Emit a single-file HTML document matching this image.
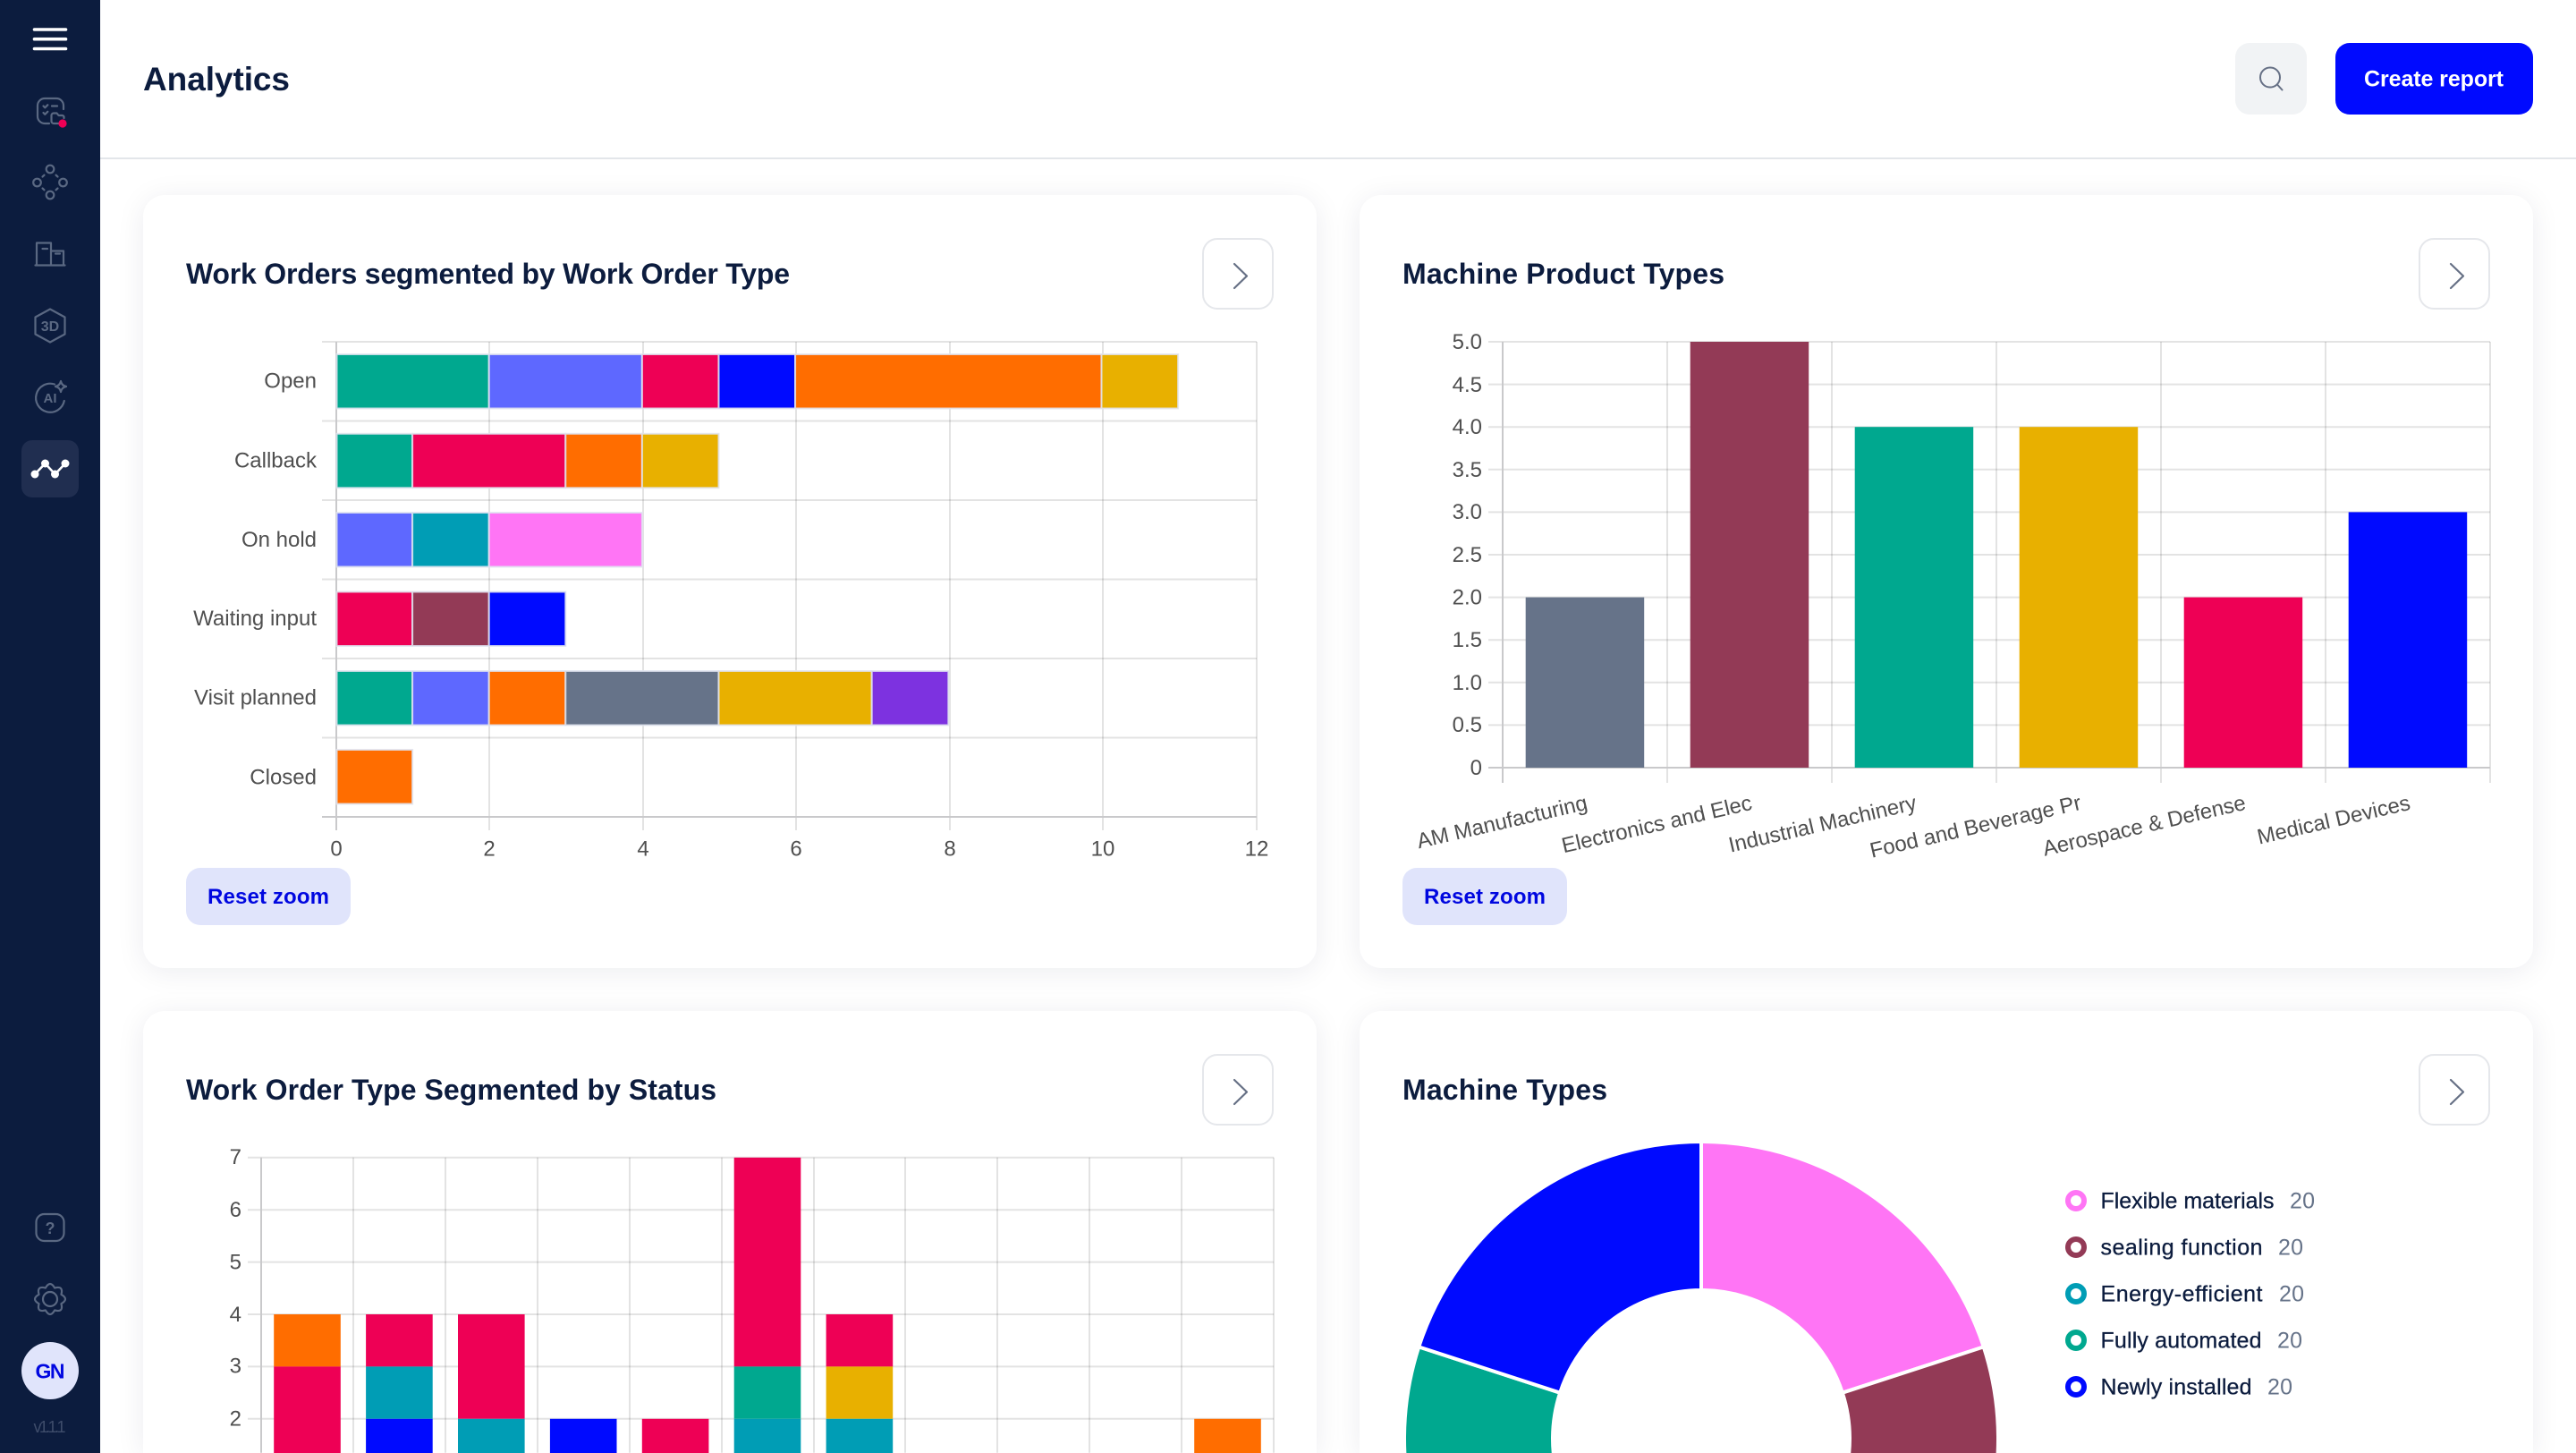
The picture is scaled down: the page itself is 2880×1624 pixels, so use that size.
<!DOCTYPE html>
<html><head><meta charset="utf-8"><title>Analytics</title>
<style>
html,body{margin:0;padding:0;width:2880px;height:1624px;overflow:hidden;background:#fff}
#root{position:absolute;left:0;top:0;width:2880px;height:1624px;overflow:hidden;background:#fff}
.card{position:absolute;background:#fff;border-radius:24px;box-shadow:0 4px 32px rgba(16,28,62,.08)}
.side{position:absolute;left:0;top:0;width:112px;height:1624px;background:#0c1c3e}
.hline{position:absolute;left:112px;top:176px;width:2768px;height:2px;background:#e3e6ea}
svg{position:absolute;left:0;top:0}
text{font-family:"Liberation Sans",sans-serif}
.t{font-size:32px;font-weight:700;fill:#0c1c3e}
.a{font-size:24px;fill:#4f4f4f}
.e{text-anchor:end}
.m{text-anchor:middle}
.g line,.g path{stroke:rgba(0,0,0,.11);stroke-width:2;fill:none}
.bb rect{stroke:rgba(225,228,240,.85);stroke-width:2}
.ic{fill:none;stroke:#5a6882;stroke-width:2.2;stroke-linecap:round;stroke-linejoin:round}
.rz{font-size:24px;font-weight:700;fill:#0007e0}
.l{font-size:25px;fill:#0c1c3e;stroke:#0c1c3e;stroke-width:.3px}
.v{font-size:25px;fill:#667389}
</style></head><body>
<div id="root">
<div class="card" style="left:160px;top:218px;width:1312px;height:864px"></div>
<div class="card" style="left:1520px;top:218px;width:1312px;height:864px"></div>
<div class="card" style="left:160px;top:1130px;width:1312px;height:494px;border-radius:24px 24px 0 0"></div>
<div class="card" style="left:1520px;top:1130px;width:1312px;height:494px;border-radius:24px 24px 0 0"></div>
<div class="hline"></div>
<div class="side"></div>
<svg width="2880" height="1624" viewBox="0 0 2880 1624" xmlns="http://www.w3.org/2000/svg">
<defs><clipPath id="fr"><rect x="0" y="0" width="2880" height="1624"/></clipPath></defs>

<!-- sidebar -->
<g stroke="#fff" stroke-width="3.6" stroke-linecap="round"><line x1="38.5" y1="33" x2="73.5" y2="33"/><line x1="38.5" y1="43.7" x2="73.5" y2="43.7"/><line x1="38.5" y1="54.5" x2="73.5" y2="54.5"/></g>
<g class="ic">
<path d="M55 138H50a8 8 0 0 1-8-8V118a8 8 0 0 1 8-8h13a8 8 0 0 1 8 8v4"/>
<path d="M48.5 118.5l1.8 1.8 3-3M48.5 126l1.8 1.8 3-3M58 118.5h6"/>
<path d="M66 138H60a2.5 2.5 0 0 1-2.5-2.5V129a2.5 2.5 0 0 1 2.500-2.500h3.500l2 2.500h4a2 2 0 0 1 2 2v1"/>
<circle cx="56" cy="189" r="4.300"/><circle cx="41.500" cy="204" r="4.300"/><circle cx="70.500" cy="204" r="4.300"/><circle cx="56" cy="218" r="4.300"/>
<path d="M47.500 197.500l2-1.800M62.500 195.700l2 1.800M47.500 210.500l2 1.800M64.500 210.500l-2 1.800"/>
<path d="M41 295V271.500H57V295M57 280.500H71V295M39.500 296.500H72.500M47.500 278h5.500M62 283.500h5"/>
<path d="M56 345.500L72.500 354.500V373.500L56 382.500L39.500 373.500V354.500Z"/>
<path d="M61 429.500A16 16 0 1 0 71.800 448"/>
<path d="M68 426Q69 431 74 432Q69 433 68 438Q67 433 62 432Q67 431 68 426Z"/>
<rect x="40.500" y="1357" width="31" height="30" rx="9"/>
<path transform="translate(56,1452)" d="M12.470 -5.170Q21.500 0 12.470 5.170Q15.200 15.200 5.170 12.470Q0 21.500 -5.170 12.470Q-15.200 15.200 -12.470 5.170Q-21.500 0 -12.470 -5.170Q-15.200 -15.200 -5.170 -12.470Q0 -21.500 5.170 -12.470Q15.200 -15.200 12.470 -5.170Z"/>
<circle cx="56" cy="1452" r="8"/>
</g>
<circle cx="70" cy="138" r="4.600" fill="#ee0055"/>
<text x="56" y="370" class="m" font-size="16" font-weight="700" fill="#5a6882">3D</text>
<text x="56" y="450" class="m" font-size="15" font-weight="700" fill="#5a6882">AI</text>
<text x="56" y="1379" class="m" font-size="18" font-weight="700" fill="#5a6882">?</text>
<rect x="24" y="492" width="64" height="64" rx="12" fill="#202e50"/>
<path d="M39 530L50.500 518L61.500 530L73 518" fill="none" stroke="#fff" stroke-width="2.600"/>
<g fill="#fff"><circle cx="39" cy="530" r="4.500"/><circle cx="50.500" cy="518" r="4.500"/><circle cx="61.500" cy="530" r="4.500"/><circle cx="73" cy="518" r="4.500"/></g>
<circle cx="56" cy="1532" r="32" fill="#e0e4fb"/>
<text x="56" y="1540.500" class="m" font-size="23" font-weight="700" fill="#0007e0" textLength="33">GN</text>
<text x="37.500" y="1601" font-size="18" fill="#3f4d6b" textLength="36">v1.1.1</text>

<!-- header -->
<text x="160" y="101" font-size="37" font-weight="700" fill="#0c1c3e" textLength="164">Analytics</text>
<rect x="2499" y="48" width="80" height="80" rx="16" fill="#f1f3f5"/>
<circle cx="2538" cy="86.500" r="11" fill="none" stroke="#667085" stroke-width="2"/>
<line x1="2546" y1="94.500" x2="2551.500" y2="100.500" stroke="#667085" stroke-width="2" stroke-linecap="round"/>
<rect x="2611" y="48" width="221" height="80" rx="16" fill="#000aff"/>
<text x="2643" y="96.500" font-size="25" font-weight="700" fill="#fff" textLength="156">Create report</text>

<!-- titles -->
<text x="208" y="317" class="t" textLength="675">Work Orders segmented by Work Order Type</text>
<text x="1568" y="317" class="t" textLength="360">Machine Product Types</text>
<text x="208" y="1229" class="t" textLength="593">Work Order Type Segmented by Status</text>
<text x="1568" y="1229" class="t" textLength="229">Machine Types</text>

<!-- arrow buttons -->
<g fill="#fff" stroke="#e5e7eb" stroke-width="2">
<rect x="1345" y="267" width="78" height="78" rx="16"/>
<rect x="2705" y="267" width="78" height="78" rx="16"/>
<rect x="1345" y="1179" width="78" height="78" rx="16"/>
<rect x="2705" y="1179" width="78" height="78" rx="16"/>
</g>
<g fill="none" stroke="#667085" stroke-width="2.200" stroke-linecap="round" stroke-linejoin="round">
<path d="M1380 295L1394 308.500L1380 322"/>
<path d="M2740 295L2754 308.500L2740 322"/>
<path d="M1380 1207L1394 1220.500L1380 1234"/>
<path d="M2740 1207L2754 1220.500L2740 1234"/>
</g>

<!-- chart 1 -->
<g class="g">
<line x1="547" y1="382" x2="547" y2="928"/><line x1="719" y1="382" x2="719" y2="928"/><line x1="890" y1="382" x2="890" y2="928"/><line x1="1062" y1="382" x2="1062" y2="928"/><line x1="1233" y1="382" x2="1233" y2="928"/><line x1="1405" y1="382" x2="1405" y2="928"/>
<line x1="360" y1="382" x2="1405" y2="382"/><line x1="360" y1="470.500" x2="1405" y2="470.500"/><line x1="360" y1="559" x2="1405" y2="559"/><line x1="360" y1="647.500" x2="1405" y2="647.500"/><line x1="360" y1="736" x2="1405" y2="736"/><line x1="360" y1="824.500" x2="1405" y2="824.500"/>
</g>
<line x1="376" y1="382" x2="376" y2="928" stroke="#c9c9cb" stroke-width="2"/>
<line x1="360" y1="913" x2="1405" y2="913" stroke="#c9c9cb" stroke-width="2"/>
<g class="bb">
<rect x="376.500" y="396" width="170.200" height="60.500" fill="#00a88f"/><rect x="546.700" y="396" width="171.200" height="60.500" fill="#5e68ff"/><rect x="717.900" y="396" width="85.600" height="60.500" fill="#ee0055"/><rect x="803.500" y="396" width="85.600" height="60.500" fill="#000aff"/><rect x="889.100" y="396" width="342.400" height="60.500" fill="#ff6d00"/><rect x="1231.500" y="396" width="85.600" height="60.500" fill="#e8b000"/>
<rect x="376.500" y="484.800" width="84.600" height="60.500" fill="#00a88f"/><rect x="461.100" y="484.800" width="171.200" height="60.500" fill="#ee0055"/><rect x="632.300" y="484.800" width="85.600" height="60.500" fill="#ff6d00"/><rect x="717.900" y="484.800" width="85.600" height="60.500" fill="#e8b000"/>
<rect x="376.500" y="573" width="84.600" height="60.500" fill="#5e68ff"/><rect x="461.100" y="573" width="85.600" height="60.500" fill="#009db5"/><rect x="546.700" y="573" width="171.200" height="60.500" fill="#ff75f5"/>
<rect x="376.500" y="661.500" width="84.600" height="60.500" fill="#ee0055"/><rect x="461.100" y="661.500" width="85.600" height="60.500" fill="#933a56"/><rect x="546.700" y="661.500" width="85.600" height="60.500" fill="#000aff"/>
<rect x="376.500" y="750" width="84.600" height="60.500" fill="#00a88f"/><rect x="461.100" y="750" width="85.600" height="60.500" fill="#5e68ff"/><rect x="546.700" y="750" width="85.600" height="60.500" fill="#ff6d00"/><rect x="632.300" y="750" width="171.200" height="60.500" fill="#667389"/><rect x="803.500" y="750" width="171.200" height="60.500" fill="#e8b000"/><rect x="974.700" y="750" width="85.600" height="60.500" fill="#7d32e0"/>
<rect x="376.500" y="838" width="84.600" height="60.500" fill="#ff6d00"/>
</g>
<g class="a e">
<text x="354" y="433.500">Open</text><text x="354" y="522.500">Callback</text><text x="354" y="610.900">On hold</text><text x="354" y="699.100">Waiting input</text><text x="354" y="787.300">Visit planned</text><text x="354" y="876.500">Closed</text>
</g>
<g class="a m">
<text x="376" y="956.500">0</text><text x="547" y="956.500">2</text><text x="719" y="956.500">4</text><text x="890" y="956.500">6</text><text x="1062" y="956.500">8</text><text x="1233" y="956.500">10</text><text x="1405" y="956.500">12</text>
</g>
<rect x="208" y="970" width="184" height="64" rx="16" fill="#e0e4fb"/>
<text x="232" y="1010" class="rz" textLength="136">Reset zoom</text>

<!-- chart 2 -->
<g class="g">
<line x1="1864" y1="382" x2="1864" y2="875"/><line x1="2048" y1="382" x2="2048" y2="875"/><line x1="2232" y1="382" x2="2232" y2="875"/><line x1="2416" y1="382" x2="2416" y2="875"/><line x1="2600" y1="382" x2="2600" y2="875"/><line x1="2784" y1="382" x2="2784" y2="875"/>
<line x1="1664" y1="382" x2="2784" y2="382"/><line x1="1664" y1="429.600" x2="2784" y2="429.600"/><line x1="1664" y1="477.200" x2="2784" y2="477.200"/><line x1="1664" y1="524.800" x2="2784" y2="524.800"/><line x1="1664" y1="572.400" x2="2784" y2="572.400"/><line x1="1664" y1="620" x2="2784" y2="620"/><line x1="1664" y1="667.600" x2="2784" y2="667.600"/><line x1="1664" y1="715.200" x2="2784" y2="715.200"/><line x1="1664" y1="762.800" x2="2784" y2="762.800"/><line x1="1664" y1="810.400" x2="2784" y2="810.400"/>
</g>
<line x1="1680" y1="382" x2="1680" y2="875" stroke="#c9c9cb" stroke-width="2"/>
<line x1="1664" y1="858" x2="2784" y2="858" stroke="#c9c9cb" stroke-width="2"/>
<rect x="1705.700" y="667.600" width="132.500" height="190.400" fill="#667389"/>
<rect x="1889.700" y="382" width="132.500" height="476" fill="#933a56"/>
<rect x="2073.700" y="477.200" width="132.500" height="380.800" fill="#00a88f"/>
<rect x="2257.700" y="477.200" width="132.500" height="380.800" fill="#e8b000"/>
<rect x="2441.700" y="667.600" width="132.500" height="190.400" fill="#ee0055"/>
<rect x="2625.700" y="572.400" width="132.500" height="285.600" fill="#000aff"/>
<g class="a e">
<text x="1657" y="390">5.0</text><text x="1657" y="438">4.5</text><text x="1657" y="485">4.0</text><text x="1657" y="533">3.5</text><text x="1657" y="580">3.0</text><text x="1657" y="628">2.5</text><text x="1657" y="675.500">2.0</text><text x="1657" y="723">1.5</text><text x="1657" y="771">1.0</text><text x="1657" y="818">0.5</text><text x="1657" y="866">0</text>
<text transform="translate(1776,904.500) rotate(-13)">AM Manufacturing</text>
<text transform="translate(1960,904.500) rotate(-13)">Electronics and Elec</text>
<text transform="translate(2144,904.500) rotate(-13)">Industrial Machinery</text>
<text transform="translate(2328,904.500) rotate(-13)">Food and Beverage Pr</text>
<text transform="translate(2512,904.500) rotate(-13)" textLength="232">Aerospace &amp; Defense</text>
<text transform="translate(2696,904.500) rotate(-13)">Medical Devices</text>
</g>
<rect x="1568" y="970" width="184" height="64" rx="16" fill="#e0e4fb"/>
<text x="1592" y="1010" class="rz" textLength="136">Reset zoom</text>

<!-- chart 3 -->
<g transform="translate(0,-.2)">
<g class="g">
<line x1="395" y1="1294" x2="395" y2="1624"/><line x1="498" y1="1294" x2="498" y2="1624"/><line x1="601" y1="1294" x2="601" y2="1624"/><line x1="704" y1="1294" x2="704" y2="1624"/><line x1="807" y1="1294" x2="807" y2="1624"/><line x1="910" y1="1294" x2="910" y2="1624"/><line x1="1012" y1="1294" x2="1012" y2="1624"/><line x1="1115" y1="1294" x2="1115" y2="1624"/><line x1="1218" y1="1294" x2="1218" y2="1624"/><line x1="1321" y1="1294" x2="1321" y2="1624"/><line x1="1424" y1="1294" x2="1424" y2="1624"/>
<line x1="277" y1="1294" x2="1424" y2="1294"/><line x1="277" y1="1352.400" x2="1424" y2="1352.400"/><line x1="277" y1="1410.800" x2="1424" y2="1410.800"/><line x1="277" y1="1469.200" x2="1424" y2="1469.200"/><line x1="277" y1="1527.600" x2="1424" y2="1527.600"/><line x1="277" y1="1586" x2="1424" y2="1586"/>
</g>
<line x1="292" y1="1294" x2="292" y2="1624" stroke="#c9c9cb" stroke-width="2"/>
<rect x="306.200" y="1469.200" width="74.600" height="58.400" fill="#ff6d00"/><rect x="306.200" y="1527.600" width="74.600" height="96.600" fill="#ee0055"/>
<rect x="409.100" y="1469.200" width="74.600" height="58.400" fill="#ee0055"/><rect x="409.100" y="1527.600" width="74.600" height="58.400" fill="#009db5"/><rect x="409.100" y="1586" width="74.600" height="38.200" fill="#000aff"/>
<rect x="512" y="1469.200" width="74.600" height="116.800" fill="#ee0055"/><rect x="512" y="1586" width="74.600" height="38.200" fill="#009db5"/>
<rect x="614.900" y="1586" width="74.600" height="38.200" fill="#000aff"/>
<rect x="717.800" y="1586" width="74.600" height="38.200" fill="#ee0055"/>
<rect x="820.700" y="1294" width="74.600" height="233.600" fill="#ee0055"/><rect x="820.700" y="1527.600" width="74.600" height="58.400" fill="#00a88f"/><rect x="820.700" y="1586" width="74.600" height="38.200" fill="#009db5"/>
<rect x="923.600" y="1469.200" width="74.600" height="58.400" fill="#ee0055"/><rect x="923.600" y="1527.600" width="74.600" height="58.400" fill="#e8b000"/><rect x="923.600" y="1586" width="74.600" height="38.200" fill="#009db5"/>
<rect x="1335.200" y="1586" width="74.600" height="38.200" fill="#ff6d00"/>
</g>
<g class="a e">
<text x="270" y="1301">7</text><text x="270" y="1360">6</text><text x="270" y="1418.500">5</text><text x="270" y="1477">4</text><text x="270" y="1534.500">3</text><text x="270" y="1593.500">2</text>
</g>

<!-- donut -->
<g stroke="#fff" stroke-width="4" stroke-linejoin="miter" clip-path="url(#fr)">
<path fill="#ff75f5" d="M1902 1276A332 332 0 0 1 2217.750 1505.400L2059.880 1556.700A166 166 0 0 0 1902 1442Z"/>
<path fill="#933a56" d="M2217.750 1505.400A332 332 0 0 1 2097.150 1876.600L1999.570 1742.300A166 166 0 0 0 2059.880 1556.700Z"/>
<path fill="#009db5" d="M2097.150 1876.600A332 332 0 0 1 1706.850 1876.600L1804.430 1742.300A166 166 0 0 0 1999.570 1742.300Z"/>
<path fill="#00a88f" d="M1706.850 1876.600A332 332 0 0 1 1586.250 1505.400L1744.120 1556.700A166 166 0 0 0 1804.430 1742.300Z"/>
<path fill="#000aff" d="M1586.250 1505.400A332 332 0 0 1 1902 1276L1902 1442A166 166 0 0 0 1744.120 1556.700Z"/>
</g>

<!-- legend -->
<g fill="#fff" stroke-width="6">
<circle cx="2321" cy="1342" r="9" stroke="#ff75f5"/>
<circle cx="2321" cy="1394" r="9" stroke="#933a56"/>
<circle cx="2321" cy="1446" r="9" stroke="#009db5"/>
<circle cx="2321" cy="1498" r="9" stroke="#00a88f"/>
<circle cx="2321" cy="1550" r="9" stroke="#000aff"/>
</g>
<text x="2348.500" y="1350.500" class="l" textLength="194">Flexible materials</text><text x="2560" y="1350.500" class="v" textLength="28">20</text>
<text x="2348.500" y="1402.500" class="l" textLength="181">sealing function</text><text x="2547" y="1402.500" class="v" textLength="28">20</text>
<text x="2348.500" y="1454.500" class="l" textLength="181">Energy-efficient</text><text x="2548" y="1454.500" class="v" textLength="28">20</text>
<text x="2348.500" y="1506.500" class="l" textLength="180">Fully automated</text><text x="2546" y="1506.500" class="v" textLength="28">20</text>
<text x="2348.500" y="1558.500" class="l" textLength="169">Newly installed</text><text x="2535" y="1558.500" class="v" textLength="28">20</text>
</svg>
</div>
</body></html>
